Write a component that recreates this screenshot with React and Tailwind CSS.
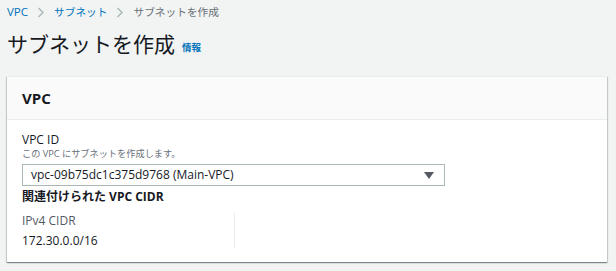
export default function App() {
  const font = { fontFamily: '"Open Sans", "Noto Sans CJK JP", sans-serif' };
  const Chevron = () => (
    <svg width="8" height="11" viewBox="0 0 8 11" className="mx-[9px]"><path d="M1.5 1l4.5 4.5-4.5 4.5" fill="none" stroke="#aab7b8" strokeWidth="1.4" /></svg>
  );
  return (
    <div className="w-[616px] h-[271px] bg-[#f2f3f3] overflow-hidden text-[#16191f]" style={font}>
      <div className="pl-[7px] pr-[9px]">
        <div className="flex items-center h-[24px] text-[11.5px]">
          <span className="text-[#0073bb]">VPC</span>
          <Chevron />
          <span className="text-[#0073bb] text-[10.7px]">サブネット</span>
          <Chevron />
          <span className="text-[#687078] text-[10.7px]">サブネットを作成</span>
        </div>
        <div className="flex items-end h-[40px] pb-[6px]">
          <h1 className="text-[21px] leading-[28px] font-normal">サブネットを作成</h1>
          <span className="ml-[7px] mb-[3px] text-[9.5px] font-bold text-[#0073bb]">情報</span>
        </div>
        <div className="mt-[12px] bg-white border-t border-[#eaeded] shadow-[0_1px_1px_0_rgba(0,28,36,0.3),1px_1px_1px_0_rgba(0,28,36,0.15),-1px_1px_1px_0_rgba(0,28,36,0.15)]">
          <div className="h-[43px] bg-[#fafafa] border-b border-[#eaeded] flex items-center px-[15px]">
            <span className="text-[15px] font-bold">VPC</span>
          </div>
          <div className="px-[15px] pt-[12px] pb-[14px]">
            <div className="text-[12px] leading-[16px]">VPC ID</div>
            <div className="text-[9.2px] leading-[11px] text-[#687078]">この VPC にサブネットを作成します。</div>
            <div className="mt-[5px] w-[423px] h-[22px] border border-[#aab7b8] flex items-center justify-between pl-[8px] pr-[10px]">
              <span className="text-[12px]">vpc-09b75dc1c375d9768 (Main-VPC)</span>
              <svg width="10" height="7" viewBox="0 0 10 7"><path d="M0 0h10L5 7z" fill="#545b64" /></svg>
            </div>
            <div className="mt-[3px] text-[12px] leading-[16px] font-bold">関連付けられた VPC CIDR</div>
            <div className="mt-[8px] flex">
              <div className="w-[213px] h-[35px] border-r border-[#eaeded]">
                <div className="text-[12px] leading-[16px] text-[#545b64]">IPv4 CIDR</div>
                <div className="mt-[4px] text-[12px] leading-[16px]">172.30.0.0/16</div>
              </div>
            </div>
          </div>
        </div>
      </div>
    </div>
  );
}
